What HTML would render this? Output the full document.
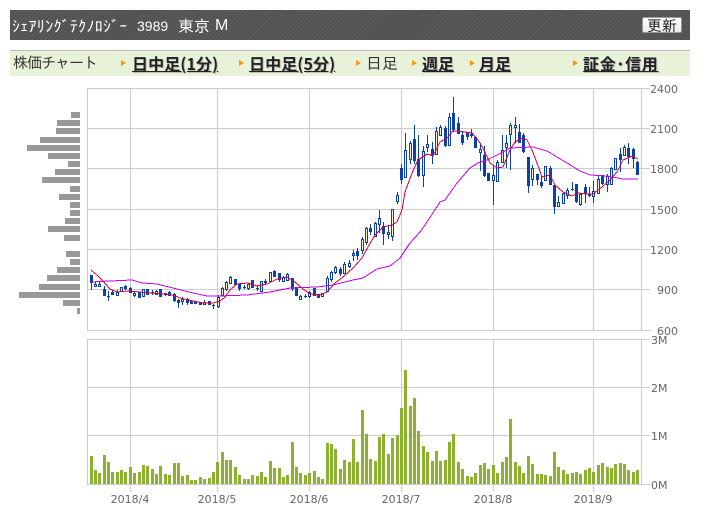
<!DOCTYPE html>
<html lang="ja">
<head>
<meta charset="utf-8">
<title>3989</title>
<style>
html,body{margin:0;padding:0;background:#fff;width:703px;height:527px;overflow:hidden}
.a{position:absolute;white-space:nowrap}
#hd{left:10px;top:10px;width:680px;height:30px;background:#555 repeating-linear-gradient(135deg,#5e5e5e 0,#5e5e5e 1px,#515151 1px,#515151 3px)}
.h{color:#fff;font-family:"IPAGothic","Noto Sans CJK JP",sans-serif;font-size:16px;line-height:20px;top:16px}
#btn{left:642px;top:17px;width:38px;height:14px;border:1px solid #999;border-radius:2px;background:linear-gradient(#fff,#ebebeb);color:#222;font:15px/15px "IPAGothic","Noto Sans CJK JP",sans-serif;text-align:center;box-sizing:content-box}
#nav{left:10px;top:50px;width:680px;height:25px;background:#e8f2d8;border-top:1px solid #bbb}
.n{font-family:"IPAGothic","Noto Sans CJK JP",sans-serif;font-size:16px;line-height:20px;top:53px;color:#333}
.l{font-family:"Noto Sans CJK JP","IPAGothic",sans-serif;font-weight:700;color:#222;top:52px;line-height:22px;font-size:16px;text-decoration:underline;text-shadow:1px 1px 0 #bbb}
.t{left:0;width:0;height:0;top:60px;border-left:5px solid #f39a12;border-top:3.5px solid transparent;border-bottom:3.5px solid transparent}
svg{position:absolute;left:0;top:0}
text{font-family:"DejaVu Sans",sans-serif;font-size:11px;fill:#666}
</style>
</head>
<body>
<div class="a" id="hd"></div>
<div class="a h" style="left:12px;letter-spacing:.3px">ｼｪｱﾘﾝｸﾞﾃｸﾉﾛｼﾞｰ</div>
<div class="a h" style="left:137px;font-family:'Liberation Sans',sans-serif;font-size:14px">3989</div>
<div class="a h" style="left:178px">東京</div>
<div class="a h" style="left:215px;font-family:'Liberation Sans',sans-serif;font-size:16px">M</div>
<div class="a" id="btn">更新</div>

<div class="a" id="nav"></div>
<div class="a n" style="left:13px;letter-spacing:-1px;font-size:15px">株価チャート</div>
<div class="a t" style="left:121px"></div>
<div class="a l" style="left:132px;letter-spacing:.1px">日中足(1分)</div>
<div class="a t" style="left:239px"></div>
<div class="a l" style="left:249px;letter-spacing:.1px">日中足(5分)</div>
<div class="a t" style="left:356px"></div>
<div class="a n" style="left:366px">日足</div>
<div class="a t" style="left:412px"></div>
<div class="a l" style="left:422px">週足</div>
<div class="a t" style="left:470px"></div>
<div class="a l" style="left:479px">月足</div>
<div class="a t" style="left:573px"></div>
<div class="a l" style="left:583px;letter-spacing:.7px">証金･信用</div>

<svg width="703" height="527" viewBox="0 0 703 527" xmlns="http://www.w3.org/2000/svg">
<!-- grid -->
<path shape-rendering="crispEdges" fill="none" stroke="#ccc" stroke-width="1" d="M87 88.5H650M87 128.5H650M87 168.5H650M87 209.5H650M87 249.5H650M87 289.5H650M87 330.5H650M87.5 88V331M130.5 88V331M217.5 88V331M309.5 88V331M401.5 88V331M493.5 88V331M593.5 88V331M641.5 88V331M87 339.5H650M87 387.5H650M87 435.5H650M87 484.5H650M87.5 339V485M130.5 339V492M217.5 339V492M309.5 339V492M401.5 339V492M493.5 339V492M593.5 339V492M641.5 339V485"/>
<!-- left histogram -->
<path shape-rendering="crispEdges" fill="#999" d="M71 112h9v6h-9zM57 120h23v6h-23zM56 128h24v6h-24zM40 137h40v6h-40zM27 145h53v6h-53zM48 153h32v6h-32zM68 161h12v6h-12zM55 169h25v6h-25zM42 177h38v6h-38zM70 186h10v6h-10zM59 194h21v6h-21zM70 202h10v6h-10zM70 210h10v6h-10zM65 218h15v6h-15zM48 226h32v6h-32zM64 235h16v6h-16zM66 251h14v6h-14zM70 259h10v6h-10zM57 267h23v6h-23zM47 275h33v6h-33zM39 284h41v6h-41zM19 292h61v6h-61zM63 300h17v6h-17zM77 308h3v6h-3z"/>
<!-- volume -->
<path shape-rendering="crispEdges" fill="none" stroke="#8cb12e" stroke-width="3" d="M91.5 456V484M95.5 470V484M99.5 473V484M104.5 455V484M108.5 462V484M112.5 472V484M117.5 472V484M121.5 470V484M125.5 472V484M130.5 467V484M134.5 473V484M139.5 472V484M143.5 465V484M147.5 466V484M152.5 469V484M156.5 474V484M160.5 466V484M165.5 474V484M169.5 475V484M174.5 463V484M178.5 463V484M182.5 476V484M187.5 475V484M191.5 480V484M195.5 480V484M200.5 477V484M204.5 479V484M209.5 478V484M213.5 472V484M217.5 462V484M222.5 452V484M226.5 460V484M230.5 460V484M235.5 467V484M239.5 475V484M244.5 479V484M248.5 479V484M252.5 475V484M257.5 476V484M261.5 472V484M265.5 477V484M270.5 461V484M274.5 468V484M279.5 468V484M283.5 477V484M287.5 475V484M292.5 442V484M296.5 467V484M300.5 473V484M305.5 475V484M309.5 473V484M314.5 471V484M318.5 477V484M322.5 479V484M327.5 443V484M331.5 444V484M335.5 449V484M340.5 469V484M344.5 460V484M349.5 462V484M353.5 439V484M357.5 462V484M362.5 410V484M366.5 434V484M370.5 459V484M375.5 461V484M379.5 437V484M383.5 434V484M388.5 454V484M392.5 438V484M397.5 435V484M401.5 408V484M405.5 370V484M410.5 406V484M414.5 398V484M418.5 431V484M423.5 446V484M427.5 452V484M432.5 461V484M436.5 451V484M440.5 461V484M445.5 460V484M449.5 442V484M453.5 434V484M458.5 462V484M462.5 469V484M467.5 476V484M471.5 477V484M475.5 473V484M480.5 465V484M484.5 463V484M488.5 469V484M493.5 465V484M497.5 473V484M502.5 462V484M506.5 457V484M510.5 419V484M515.5 462V484M519.5 466V484M523.5 473V484M528.5 456V484M532.5 464V484M537.5 474V484M541.5 474V484M545.5 475V484M550.5 476V484M554.5 452V484M558.5 467V484M563.5 470V484M567.5 474V484M572.5 473V484M576.5 472V484M580.5 474V484M585.5 470V484M589.5 468V484M593.5 472V484M598.5 465V484M602.5 463V484M607.5 467V484M611.5 468V484M615.5 464V484M620.5 463V484M624.5 464V484M628.5 470V484M633.5 472V484M637.5 470V484"/>
<!-- wicks -->
<path shape-rendering="crispEdges" fill="none" stroke="#0b40a6" stroke-width="1" d="M91.5 275V290M95.5 282V287M99.5 282V287M104.5 286V296M108.5 291V301M112.5 290V295M117.5 290V296M121.5 287V292M125.5 285V290M130.5 287V293M134.5 292V297M152.5 290V295M156.5 290V295M165.5 293V296M169.5 291V296M174.5 293V302M178.5 299V308M182.5 297V305M187.5 298V305M204.5 300V305M213.5 304V309M218.5 295V308M222.5 287V296M226.5 281V291M230.5 276V284M239.5 284V291M244.5 285V289M248.5 284V290M257.5 286V291M265.5 279V285M274.5 270V277M279.5 273V282M283.5 276V282M287.5 273V281M292.5 278V291M300.5 295V300M305.5 294V298M309.5 291V298M327.5 276V292M331.5 271V282M335.5 266V274M340.5 267V276M344.5 262V274M349.5 260V268M353.5 250V261M357.5 248V260M362.5 237V254M366.5 227V245M370.5 224V235M375.5 222V237M379.5 210V233M383.5 222V245M388.5 225V239M392.5 209V241M397.5 192V204M401.5 164V184M405.5 133V178M410.5 141V164M414.5 125V164M418.5 135V177M423.5 146V187M427.5 135V152M432.5 142V164M436.5 127V155M440.5 125V136M445.5 126V147M449.5 113V146M453.5 97V132M458.5 117V134M462.5 132V145M467.5 132V140M471.5 129V138M480.5 143V171M484.5 146V177M493.5 166V205M497.5 160V182M502.5 135V163M506.5 135V168M510.5 123V170M515.5 117V143M519.5 124V143M523.5 133V153M528.5 157V193M532.5 165V186M537.5 174V185M541.5 175V188M550.5 166V185M554.5 185V214M558.5 196V207M563.5 193V204M567.5 188V199M572.5 182V191M576.5 184V203M580.5 194V206M585.5 184V203M589.5 187V197M593.5 181V203M598.5 175V194M602.5 175V185M607.5 174V192M611.5 167V185M620.5 148V172M624.5 145V156M628.5 143V164M633.5 148V168M637.5 161V175"/>
<!-- filled bodies -->
<path shape-rendering="crispEdges" fill="none" stroke="#0b40a6" stroke-width="3" d="M91.5 275V283M104.5 289V296M108.5 296V297M112.5 292V295M125.5 286V289M130.5 288V293M139.5 292V298M147.5 289V295M152.5 292V293M160.5 289V297M165.5 293V295M169.5 292V296M174.5 294V301M178.5 300V303M187.5 299V303M191.5 301V304M195.5 301V304M200.5 302V305M209.5 301V305M213.5 305V306M235.5 279V285M239.5 284V289M244.5 287V288M252.5 280V288M257.5 288V289M265.5 281V283M274.5 271V277M279.5 273V280M292.5 278V289M296.5 287V296M305.5 296V297M314.5 288V296M318.5 294V298M340.5 269V274M357.5 251V256M370.5 228V232M383.5 226V234M401.5 168V180M414.5 139V161M418.5 159V176M432.5 149V155M445.5 128V146M453.5 113V130M458.5 123V134M462.5 135V143M467.5 132V137M471.5 134V136M475.5 137V148M484.5 155V176M488.5 173V181M519.5 132V143M523.5 135V152M528.5 157V186M537.5 174V180M541.5 182V186M550.5 168V185M554.5 185V207M572.5 189V190M576.5 184V202M585.5 187V194M602.5 175V184M620.5 154V160M628.5 148V157M633.5 149V159M637.5 162V175"/>
<!-- hollow bodies -->
<path shape-rendering="crispEdges" fill="#f8f4cc" stroke="#0b40a6" stroke-width="1" d="M94.5 284.5h2V286.5h-2zM98.5 284.5h2V286.5h-2zM116.5 292.5h2V295.5h-2zM120.5 287.5h2V291.5h-2zM133.5 293.5h2V295.5h-2zM142.5 289.5h2V296.5h-2zM155.5 291.5h2V294.5h-2zM181.5 299.5h2V301.5h-2zM203.5 302.5h2V304.5h-2zM217.5 297.5h2V306.5h-2zM221.5 288.5h2V295.5h-2zM225.5 282.5h2V289.5h-2zM229.5 277.5h2V283.5h-2zM247.5 284.5h2V288.5h-2zM260.5 281.5h2V291.5h-2zM269.5 272.5h2V281.5h-2zM282.5 277.5h2V281.5h-2zM286.5 274.5h2V280.5h-2zM299.5 296.5h2V299.5h-2zM308.5 292.5h2V296.5h-2zM321.5 293.5h2V296.5h-2zM326.5 278.5h2V291.5h-2zM330.5 272.5h2V279.5h-2zM334.5 267.5h2V272.5h-2zM343.5 264.5h2V273.5h-2zM348.5 263.5h2V266.5h-2zM352.5 253.5h2V255.5h-2zM361.5 239.5h2V250.5h-2zM365.5 228.5h2V242.5h-2zM374.5 223.5h2V236.5h-2zM378.5 218.5h2V224.5h-2zM387.5 232.5h2V234.5h-2zM391.5 209.5h2V236.5h-2zM396.5 195.5h2V201.5h-2zM404.5 150.5h2V177.5h-2zM409.5 143.5h2V159.5h-2zM422.5 151.5h2V175.5h-2zM426.5 144.5h2V147.5h-2zM435.5 131.5h2V154.5h-2zM439.5 127.5h2V135.5h-2zM448.5 117.5h2V145.5h-2zM479.5 149.5h2V152.5h-2zM492.5 175.5h2V180.5h-2zM496.5 162.5h2V181.5h-2zM501.5 150.5h2V162.5h-2zM505.5 143.5h2V147.5h-2zM509.5 125.5h2V134.5h-2zM514.5 125.5h2V127.5h-2zM531.5 168.5h2V179.5h-2zM544.5 166.5h2V180.5h-2zM557.5 202.5h2V206.5h-2zM562.5 193.5h2V203.5h-2zM566.5 190.5h2V195.5h-2zM579.5 194.5h2V204.5h-2zM588.5 194.5h2V195.5h-2zM592.5 191.5h2V196.5h-2zM597.5 179.5h2V193.5h-2zM606.5 176.5h2V184.5h-2zM610.5 168.5h2V184.5h-2zM614.5 158.5h2V169.5h-2zM623.5 147.5h2V155.5h-2z"/>
<!-- moving averages -->
<polyline shape-rendering="crispEdges" fill="none" stroke="#c800f0" stroke-width="1" points="91,282 110,281 132,280 142,283 157,284 173,288 193,293 207,296 220,296 247,295 270,292 290,288 317,287 333,285 353,280 363,278 377,269 390,266 400,258 410,243 420,232 425,225 440,202 445,200 457,183 470,168 478,163 487,160 503,152 510,148 533,147 547,151 567,163 580,171 590,175 607,176 623,179 638,179"/>
<polyline shape-rendering="crispEdges" fill="none" stroke="#d8003c" stroke-width="1" points="91,270 98,276 102,280 110,289 117,292 128,291 140,292 150,293 163,294 173,295 180,298 193,301 203,303 213,303 220,301 225,297 230,290 237,284 248,283 257,286 267,284 277,279 287,277 295,282 303,289 310,294 320,295 327,292 335,283 343,277 353,268 362,258 368,247 375,235 383,227 392,225 397,222 402,210 405,192 412,173 418,160 427,154 433,156 440,142 447,138 453,131 458,131 465,132 472,133 478,140 483,148 490,163 497,168 503,167 510,150 515,142 522,138 527,140 532,150 537,163 542,177 550,175 555,185 563,192 572,196 578,193 587,194 593,194 602,187 610,180 617,172 623,160 632,156 638,159"/>
<!-- labels -->
<text x="678" y="93" text-anchor="end">2400</text>
<text x="678" y="133" text-anchor="end">2100</text>
<text x="678" y="173" text-anchor="end">1800</text>
<text x="678" y="214" text-anchor="end">1500</text>
<text x="678" y="254" text-anchor="end">1200</text>
<text x="678" y="294" text-anchor="end">900</text>
<text x="678" y="335" text-anchor="end">600</text>
<text x="651" y="344">3M</text>
<text x="651" y="392">2M</text>
<text x="651" y="440">1M</text>
<text x="651" y="489">0M</text>
<text x="130" y="503" text-anchor="middle">2018/4</text>
<text x="217" y="503" text-anchor="middle">2018/5</text>
<text x="309" y="503" text-anchor="middle">2018/6</text>
<text x="401" y="503" text-anchor="middle">2018/7</text>
<text x="493" y="503" text-anchor="middle">2018/8</text>
<text x="593" y="503" text-anchor="middle">2018/9</text>
</svg>
</body>
</html>
